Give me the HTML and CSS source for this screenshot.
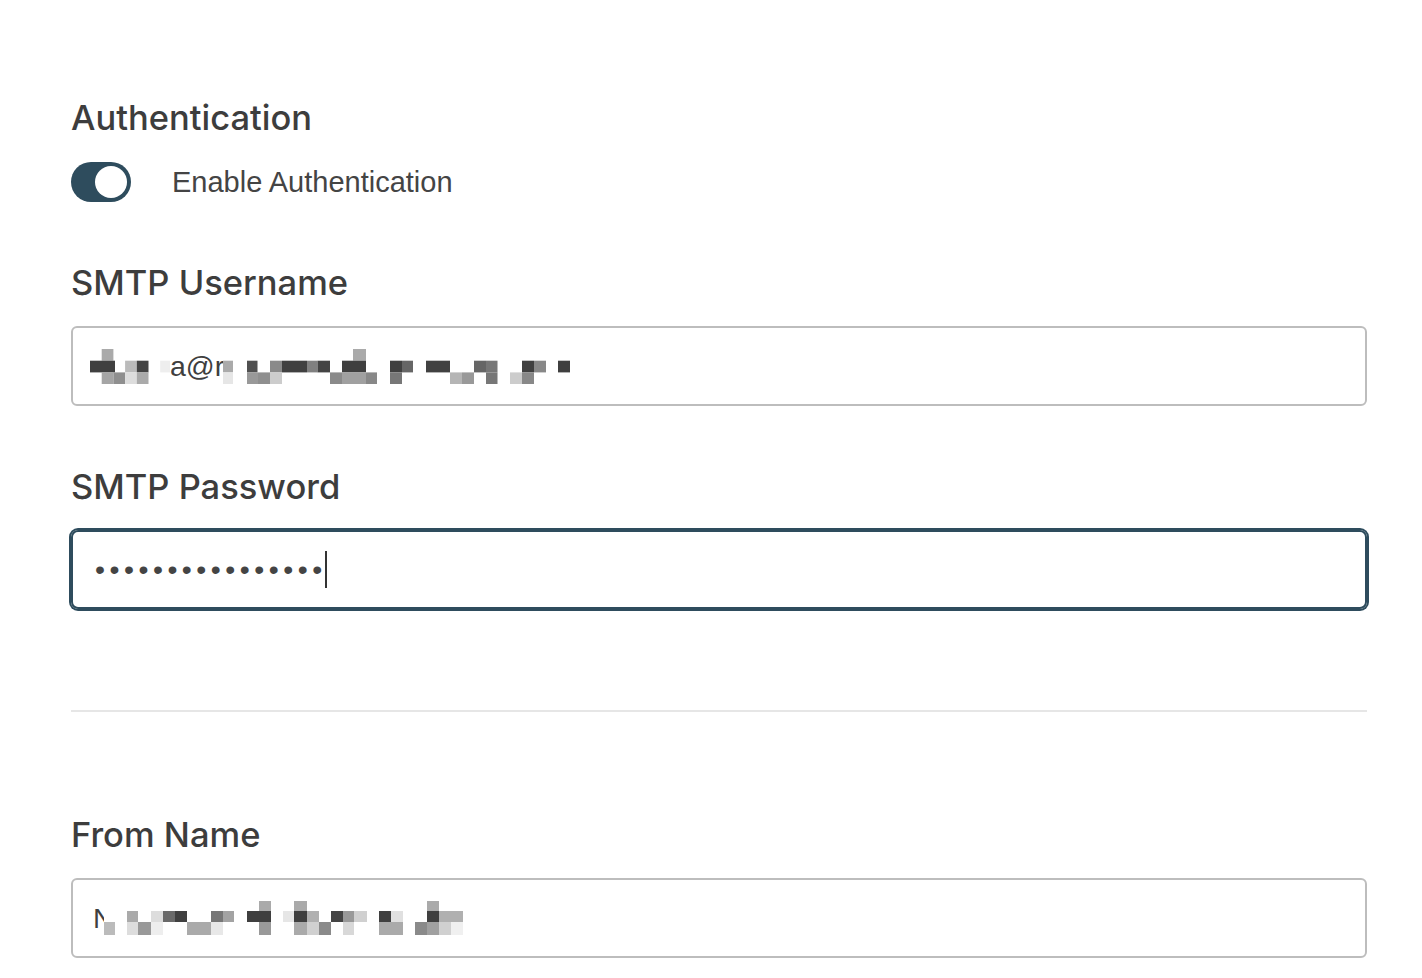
FILE: index.html
```html
<!DOCTYPE html>
<html lang="en">
<head>
    <meta charset="UTF-8">
    <meta name="viewport" content="width=device-width, initial-scale=1.0">
    <title>SMTP Settings</title>
    <link rel="stylesheet" href="styles.css">
</head>
<body>

    <div class="settings">

        <!-- Authentication -->
        <h2 class="section-title">Authentication</h2>
        <div class="toggle-row">
            <span class="toggle is-on"><span class="toggle-knob"></span></span>
            <span class="toggle-label">Enable Authentication</span>
        </div>

        <div class="field">
            <label class="field-label">SMTP Username</label>
            <div class="field-input">
                <svg class="mosaic mosaic-user" width="80" height="35" viewBox="0 0 80 35">
                    <rect x="11.7" y="0" width="11.7" height="11.7" fill="#aaa"/>
                    <rect x="0" y="11.7" width="25" height="11.7" fill="#404040"/>
                    <rect x="35.1" y="11.7" width="11.7" height="11.7" fill="#bbb"/>
                    <rect x="46.8" y="11.7" width="11.7" height="11.7" fill="#444"/>
                    <rect x="70.2" y="11.7" width="9.8" height="11.7" fill="#eee"/>
                    <rect x="11.7" y="23.4" width="11.7" height="11.6" fill="#a5a5a5"/>
                    <rect x="23.4" y="23.4" width="11.7" height="11.6" fill="#8f8f8f"/>
                    <rect x="35.1" y="23.4" width="11.7" height="11.6" fill="#ddd"/>
                    <rect x="46.8" y="23.4" width="11.7" height="11.6" fill="#aaa"/>
                </svg><span class="field-text">a@r</span><svg class="mosaic mosaic-user-after" width="347" height="35" viewBox="0 0 347 35">
                    <rect x="130" y="0" width="13" height="11.7" fill="#aaa"/>
                    <rect x="0" y="11.7" width="10" height="11.7" fill="#aaa"/>
                    <rect x="24" y="11.7" width="10.5" height="11.7" fill="#505050"/>
                    <rect x="47" y="11.7" width="12" height="11.7" fill="#8a8a8a"/>
                    <rect x="59" y="11.7" width="25" height="11.7" fill="#404040"/>
                    <rect x="84" y="11.7" width="10.5" height="11.7" fill="#808080"/>
                    <rect x="94.5" y="11.7" width="12.5" height="11.7" fill="#444"/>
                    <rect x="119" y="11.7" width="24" height="11.7" fill="#3f3f3f"/>
                    <rect x="167" y="11.7" width="12" height="11.7" fill="#404040"/>
                    <rect x="179" y="11.7" width="11" height="11.7" fill="#666"/>
                    <rect x="203" y="11.7" width="24" height="11.7" fill="#414141"/>
                    <rect x="251" y="11.7" width="12" height="11.7" fill="#666"/>
                    <rect x="263" y="11.7" width="11.5" height="11.7" fill="#777"/>
                    <rect x="299" y="11.7" width="12" height="11.7" fill="#404040"/>
                    <rect x="311" y="11.7" width="12" height="11.7" fill="#888"/>
                    <rect x="335" y="11.7" width="12" height="11.7" fill="#3f3f3f"/>
                    <rect x="0" y="23.4" width="10" height="11.6" fill="#e6e6e6"/>
                    <rect x="24" y="23.4" width="11" height="11.6" fill="#999"/>
                    <rect x="35" y="23.4" width="12" height="11.6" fill="#8f8f8f"/>
                    <rect x="47" y="23.4" width="12" height="11.6" fill="#ccc"/>
                    <rect x="107" y="23.4" width="12" height="11.6" fill="#8a8a8a"/>
                    <rect x="119" y="23.4" width="24" height="11.6" fill="#a0a0a0"/>
                    <rect x="143" y="23.4" width="11" height="11.6" fill="#888"/>
                    <rect x="167" y="23.4" width="12" height="11.6" fill="#777"/>
                    <rect x="227" y="23.4" width="12" height="11.6" fill="#b5b5b5"/>
                    <rect x="239" y="23.4" width="12" height="11.6" fill="#999"/>
                    <rect x="263" y="23.4" width="11.5" height="11.6" fill="#777"/>
                    <rect x="287" y="23.4" width="12" height="11.6" fill="#ccc"/>
                    <rect x="299" y="23.4" width="12" height="11.6" fill="#888"/>
                </svg>
            </div>
        </div>

        <div class="field">
            <label class="field-label">SMTP Password</label>
            <div class="field-input is-focused">
                <span class="password-dots">••••••••••••••••</span><span class="caret"></span>
            </div>
        </div>

        <hr class="divider">

        <div class="field">
            <label class="field-label">From Name</label>
            <div class="field-input">
                <span class="field-text">N</span><svg class="mosaic mosaic-name" width="360" height="34" viewBox="0 0 360 34">
                    <rect x="155" y="0" width="12" height="10" fill="#aaa"/>
                    <rect x="190" y="0" width="13" height="10" fill="#aaa"/>
                    <rect x="323" y="0" width="12" height="10" fill="#aaa"/>
                    <rect x="0" y="0" width="11" height="21" fill="#fff"/>
                    <rect x="23" y="10" width="11" height="11" fill="#aaa"/>
                    <rect x="47" y="10" width="12" height="11" fill="#ddd"/>
                    <rect x="59" y="10" width="12" height="11" fill="#6a6a6a"/>
                    <rect x="71" y="10" width="12" height="11" fill="#404040"/>
                    <rect x="107" y="10" width="12" height="11" fill="#777"/>
                    <rect x="119" y="10" width="11" height="11" fill="#a3a3a3"/>
                    <rect x="143" y="10" width="24" height="11" fill="#3f3f3f"/>
                    <rect x="179" y="10" width="11" height="11" fill="#e6e6e6"/>
                    <rect x="190" y="10" width="13" height="11" fill="#3f3f3f"/>
                    <rect x="203" y="10" width="12" height="11" fill="#b0b0b0"/>
                    <rect x="227" y="10" width="12" height="11" fill="#454545"/>
                    <rect x="239" y="10" width="11" height="11" fill="#999"/>
                    <rect x="250" y="10" width="13" height="11" fill="#d0d0d0"/>
                    <rect x="275" y="10" width="12" height="11" fill="#404040"/>
                    <rect x="287" y="10" width="12" height="11" fill="#e0e0e0"/>
                    <rect x="323" y="10" width="12" height="11" fill="#3f3f3f"/>
                    <rect x="335" y="10" width="24" height="11" fill="#b0b0b0"/>
                    <rect x="0" y="21" width="11" height="13" fill="#bbb"/>
                    <rect x="23" y="21" width="11" height="13" fill="#ddd"/>
                    <rect x="34" y="21" width="13" height="13" fill="#999"/>
                    <rect x="47" y="21" width="12" height="13" fill="#eee"/>
                    <rect x="83" y="21" width="24" height="13" fill="#aaa"/>
                    <rect x="107" y="21" width="12" height="13" fill="#e8e8e8"/>
                    <rect x="155" y="21" width="12" height="13" fill="#999"/>
                    <rect x="190" y="21" width="13" height="13" fill="#aaa"/>
                    <rect x="203" y="21" width="12" height="13" fill="#d0d0d0"/>
                    <rect x="215" y="21" width="12" height="13" fill="#8a8a8a"/>
                    <rect x="239" y="21" width="11" height="13" fill="#d8d8d8"/>
                    <rect x="275" y="21" width="24" height="13" fill="#aaa"/>
                    <rect x="311" y="21" width="12" height="13" fill="#8a8a8a"/>
                    <rect x="323" y="21" width="12" height="13" fill="#a0a0a0"/>
                    <rect x="335" y="21" width="12" height="13" fill="#d0d0d0"/>
                    <rect x="347" y="21" width="12" height="13" fill="#f0f0f0"/>
                </svg>
            </div>
        </div>

    </div>

</body>
</html>
```

FILE: styles.css
```css
body {
    background-color: white;
    color: #444;
    font-family: 'Liberation Sans', Arial, sans-serif;
    margin: 0;
    padding: 0;
}
.settings {
    width: 1296px;
    padding: 96px 0 0 71px;
}
.section-title,
.field-label {
    display: block;
    font-family: Inter, 'Liberation Sans', sans-serif;
    font-weight: 500;
    font-size: 34.5px;
    line-height: 44px;
    color: #3d3d3d;
    margin: 0;
}
.toggle-row {
    display: flex;
    align-items: center;
    height: 40px;
    margin-top: 22px;
}
.toggle {
    display: flex;
    align-items: center;
    justify-content: flex-end;
    box-sizing: border-box;
    width: 60px;
    height: 40px;
    padding: 4px;
    border-radius: 20px;
    background-color: #ccc;
}
.toggle.is-on {
    background-color: #2e4c5d;
}
.toggle-knob {
    width: 32px;
    height: 32px;
    border-radius: 50%;
    background-color: white;
}
.toggle-label {
    margin-left: 41px;
    font-size: 29px;
    color: #444;
}
.field {
    margin-top: 59px;
}
.field-label {
    margin-bottom: 21px;
}
.field-input {
    display: flex;
    align-items: center;
    box-sizing: border-box;
    height: 80px;
    padding-left: 20px;
    border: 2px solid #bdbdbd;
    border-radius: 6px;
    font-size: 28.5px;
    color: #3f3f3f;
}
.field-input.is-focused {
    border-color: #2e4c5d;
    box-shadow: 0 0 0 2px #2e4c5d;
    border-radius: 7px;
    height: 79px;
}
.mosaic {
    display: block;
    flex-shrink: 0;
}
.mosaic-user {
    margin-left: -3px;
}
.mosaic-user-after {
    margin-left: -1px;
}
.mosaic-name {
    margin-left: -10px;
}
.field-text {
    white-space: nowrap;
}
.password-dots {
    letter-spacing: 4.5px;
    margin-left: 2px;
    color: #444;
}
.caret {
    display: block;
    width: 2px;
    height: 37px;
    margin-left: -2px;
    background-color: #333;
}
.divider {
    border: none;
    border-top: 2px solid #e6e6e6;
    margin: 101px 0 0 0;
}
.divider + .field {
    margin-top: 101px;
}
```
